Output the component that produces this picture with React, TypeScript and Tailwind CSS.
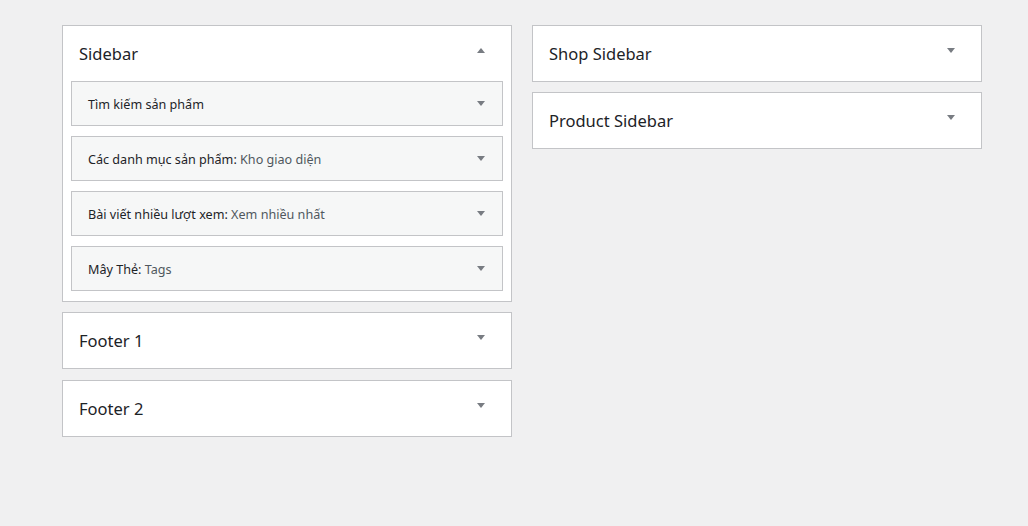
const widgets = [
  { title: "Tìm kiếm sản phẩm", sub: "" },
  { title: "Các danh mục sản phẩm:", sub: "Kho giao diện" },
  { title: "Bài viết nhiều lượt xem:", sub: "Xem nhiều nhất" },
  { title: "Mây Thẻ:", sub: "Tags" },
];

function Arrow({ up = false }: { up?: boolean }) {
  return (
    <svg width="8" height="5" viewBox="0 0 8 5" className="shrink-0 fill-[#787c82]">
      {up ? <polygon points="0,5 8,5 4,0" /> : <polygon points="0,0 8,0 4,5" />}
    </svg>
  );
}

function SidebarBox({ name, open = false, children }: { name: string; open?: boolean; children?: React.ReactNode }) {
  return (
    <div className="border border-[#c3c4c7] bg-white">
      <div className="flex h-[55px] items-center justify-between pl-[16px] pr-[26px]">
        <h2 className="pt-[1px] text-[16.5px] text-[#1d2327]">{name}</h2>
        <div className="-mt-[6px]">
          <Arrow up={open} />
        </div>
      </div>
      {children}
    </div>
  );
}

export default function App() {
  return (
    <div
      className="min-h-[526px] w-full bg-[#f0f0f1] pt-[25px]"
      style={{ fontFamily: '"Noto Sans", "Open Sans", sans-serif' }}
    >
      <div className="ml-[62px] flex gap-[20px]">
        <div className="flex w-[450px] flex-col gap-[10px]">
          <SidebarBox name="Sidebar" open>
            <div className="flex flex-col gap-[10px] px-[8px] pb-[10px]">
              {widgets.map((w) => (
                <div
                  key={w.title}
                  className="flex h-[45px] items-center justify-between border border-[#c3c4c7] bg-[#f6f7f7] pl-[16px] pr-[17px]"
                >
                  <p className="pt-[3px] text-[12.6px] text-[#1d2327]">
                    {w.title}
                    {w.sub && <span className="text-[#50575e]"> {w.sub}</span>}
                  </p>
                  <Arrow />
                </div>
              ))}
            </div>
          </SidebarBox>
          <SidebarBox name="Footer 1" />
          <div className="mt-[1px]">
            <SidebarBox name="Footer 2" />
          </div>
        </div>
        <div className="flex w-[450px] flex-col gap-[10px]">
          <SidebarBox name="Shop Sidebar" />
          <SidebarBox name="Product Sidebar" />
        </div>
      </div>
    </div>
  );
}
